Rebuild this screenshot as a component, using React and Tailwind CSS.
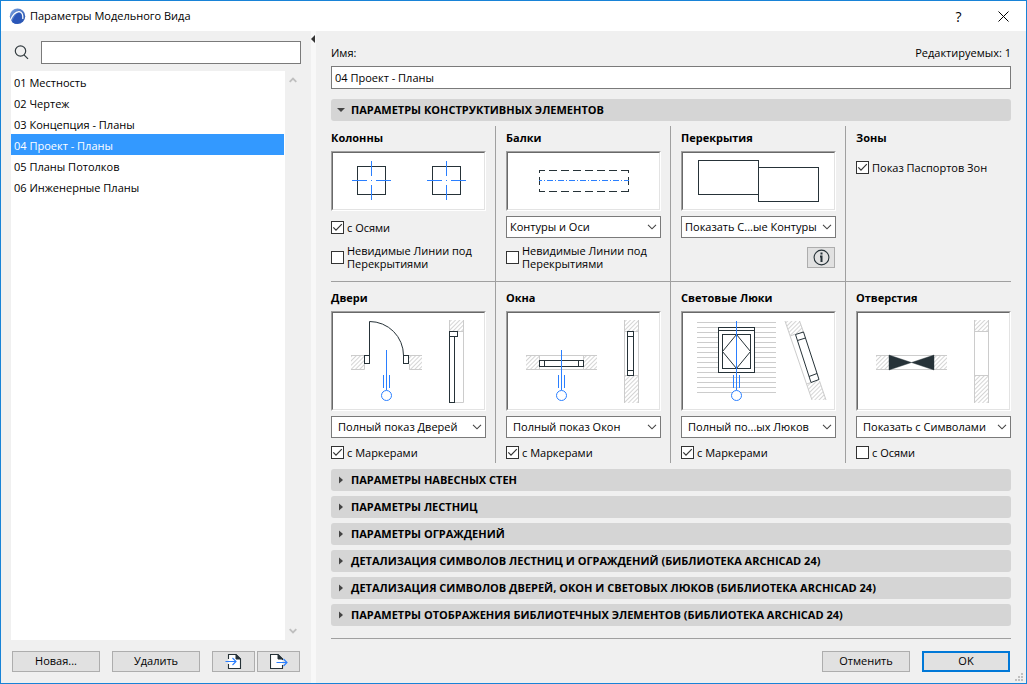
import React, { useState } from "react";

const models = [
  "01 Местность",
  "02 Чертеж",
  "03 Концепция - Планы",
  "04 Проект - Планы",
  "05 Планы Потолков",
  "06 Инженерные Планы",
];

const closedSections = [
  "ПАРАМЕТРЫ НАВЕСНЫХ СТЕН",
  "ПАРАМЕТРЫ ЛЕСТНИЦ",
  "ПАРАМЕТРЫ ОГРАЖДЕНИЙ",
  "ДЕТАЛИЗАЦИЯ СИМВОЛОВ ЛЕСТНИЦ И ОГРАЖДЕНИЙ (БИБЛИОТЕКА ARCHICAD 24)",
  "ДЕТАЛИЗАЦИЯ СИМВОЛОВ ДВЕРЕЙ, ОКОН И СВЕТОВЫХ ЛЮКОВ (БИБЛИОТЕКА ARCHICAD 24)",
  "ПАРАМЕТРЫ ОТОБРАЖЕНИЯ БИБЛИОТЕЧНЫХ ЭЛЕМЕНТОВ (БИБЛИОТЕКА ARCHICAD 24)",
];

const DARK = "#263238";
const BLUE = "#2a7fff";
const GREY = "#cccccc";

const Checkbox = ({ label, checked = false }) => {
  const [on, setOn] = useState(checked);
  return (
    <label className="flex items-center gap-[3px] leading-[13px]">
      <span className="grid h-[13px] w-[13px] shrink-0">
        <input
          type="checkbox"
          checked={on}
          onChange={(e) => setOn(e.target.checked)}
          className="col-start-1 row-start-1 h-[13px] w-[13px] appearance-none border border-[#333333] bg-white"
        />
        {on && (
          <svg
            viewBox="0 0 13 13"
            className="pointer-events-none col-start-1 row-start-1 h-[13px] w-[13px]"
          >
            <path d="M2.3 6.3L5 9.2L10.8 3.2" fill="none" stroke="#333" strokeWidth="1.2" />
          </svg>
        )}
      </span>
      <span>{label}</span>
    </label>
  );
};

const Dropdown = ({ label, value, className = "pl-[3px]" }) => (
  <div className="grid h-[22px] w-full">
    <select
      aria-label={label}
      className={`col-start-1 row-start-1 h-[22px] w-full appearance-none border border-[#7a7a7a] bg-white pr-4 leading-5 ${className}`}
    >
      <option>{value}</option>
    </select>
    <svg
      viewBox="0 0 10 6"
      className="pointer-events-none col-start-1 row-start-1 mr-1 h-[6px] w-[10px] self-center justify-self-end"
    >
      <path d="M1 0.8L5 4.8L9 0.8" fill="none" stroke="#444" strokeWidth="1.1" />
    </svg>
  </div>
);

// Sunken frame around the drawing
const Preview = ({ height, children }) => (
  <div className="border border-b-white border-l-[#a0a0a0] border-r-white border-t-[#a0a0a0]">
    <div className="border border-b-[#e3e3e3] border-l-[#696969] border-r-[#e3e3e3] border-t-[#696969] bg-white">
      <svg
        width="151"
        height={height}
        viewBox={`2 2 151 ${height}`}
        fill="none"
        className="mx-auto block"
      >
        {children}
      </svg>
    </div>
  </div>
);

const Cell = ({ title, last = false, children }) => (
  <div
    className={
      last
        ? "flex flex-col gap-[5px] px-[10px]"
        : "flex flex-col gap-[5px] border-r border-[#a0a0a0] pl-[10px] pr-[9px]"
    }
  >
    <h3 className="font-bold leading-4">{title}</h3>
    {children}
  </div>
);

const SectionHeader = ({ title, open = false, onClick }) => (
  <button
    type="button"
    aria-expanded={open}
    onClick={onClick}
    className="flex h-[22px] w-full items-center rounded-[3px] bg-[#d5d5d5] text-left font-bold"
  >
    <span className="flex w-5 justify-center">
      <svg width="8" height="8" viewBox="0 0 8 8" fill="#444">
        {open ? <path d="M0 2H8L4 6Z" /> : <path d="M2 0.5V7.5L6 4Z" />}
      </svg>
    </span>
    {title}
  </button>
);

const Marker = () => (
  <g stroke={BLUE}>
    <path d="M55.5 39V79M52.5 64V77M58.5 64V77" />
    <circle cx="55.5" cy="84.5" r="5" fill="#fff" />
  </g>
);

const ColumnMark = ({ x }) => (
  <g transform={`translate(${x} 0)`}>
    <rect x="26.5" y="15.5" width="28" height="28" stroke={DARK} />
    <path
      d="M21 29.5H36M40 29.5H41M45 29.5H60M40.5 10V25M40.5 34V49"
      stroke={BLUE}
    />
  </g>
);

// Wall in plan: two hatched ends with an opening between them
const WallPlan = () => (
  <g>
    <rect x="20" y="44" width="13" height="15" fill="url(#hatch)" />
    <rect x="78" y="44" width="13" height="15" fill="url(#hatch)" />
    <path d="M20 44.5H91M20 58.5H91M33.5 44V59M77.5 44V59" stroke={GREY} />
  </g>
);

// Wall in section
const WallSection = () => (
  <g>
    <rect x="118" y="9" width="15" height="11" fill="url(#hatch)" />
    <rect x="118" y="65" width="15" height="27" fill="url(#hatch)" />
    <path d="M118.5 9V92M132.5 9V92M118 20.5H133M118 64.5H133" stroke={GREY} />
  </g>
);

const DoorDrawing = () => (
  <Preview height={96}>
    <rect x="20" y="44" width="13" height="15" fill="url(#hatch)" />
    <rect x="78" y="44" width="13" height="15" fill="url(#hatch)" />
    <path d="M20 44.5H33M20 58.5H33.5V53M78 44.5H91M91 58.5H78.5V53" stroke={GREY} />
    <path d="M38.5 45V10.5A34 34 0 0 1 72.5 44.5" stroke={DARK} />
    <rect x="33.5" y="44.5" width="5" height="8" stroke={DARK} />
    <rect x="72.5" y="44.5" width="5" height="8" stroke={DARK} />
    <Marker />
    <rect x="118" y="9" width="15" height="11" fill="url(#hatch)" />
    <path d="M118.5 9V20M132.5 9V91.5H124M127 20.5H133" stroke={GREY} />
    <rect x="118.5" y="20.5" width="8" height="5" fill="#fff" stroke={DARK} />
    <rect x="118.5" y="25.5" width="5" height="66" fill="#fff" stroke={DARK} />
  </Preview>
);

const WindowDrawing = () => (
  <Preview height={96}>
    <WallPlan />
    <rect x="33.5" y="49.5" width="44" height="6" stroke={DARK} />
    <path d="M38.5 49V56M72.5 49V56" stroke={DARK} />
    <Marker />
    <WallSection />
    <rect x="121.5" y="20.5" width="6" height="44" stroke={DARK} />
    <path d="M121 25.5H128M121 59.5H128" stroke={DARK} />
  </Preview>
);

const SkylightDrawing = () => (
  <Preview height={96}>
    {Array.from({ length: 15 }, (_, i) => (
      <path key={i} d={`M16 ${11.5 + i * 5}H95`} stroke={GREY} />
    ))}
    <rect x="37.5" y="16.5" width="36" height="45" fill="#fff" stroke={DARK} />
    <path d="M37 19.5H74" stroke={DARK} />
    <rect x="41.5" y="23.5" width="28" height="34" stroke={DARK} />
    <path d="M55.5 23.5L69.5 40.5L55.5 57.5L41.5 40.5Z" stroke={DARK} />
    <Marker />
    <path d="M55.5 10V64" stroke={BLUE} />
    <path d="M104 10H119L122.5 21L109.5 25.5Z" fill="url(#hatch)" />
    <path d="M125.5 72.5L138 69.5L145 89H131Z" fill="url(#hatch)" />
    <path d="M104 10L131 89M118.5 10L122.5 21M138.5 70L145 89M109.5 25L114 23M125.5 73L130 71.5" stroke={GREY} />
    <path d="M114.5 23.5L122.5 21L138 68.5L130 71.5Z" fill="#fff" stroke={DARK} />
    <path d="M116.5 29.5L124.5 27M128 65.5L136 62.5" stroke={DARK} />
  </Preview>
);

const OpeningDrawing = () => (
  <Preview height={96}>
    <WallPlan />
    <path d="M33 44V59L55.5 51.5ZM78 44V59L55.5 51.5Z" fill={DARK} stroke={DARK} strokeWidth="0.4" />
    <WallSection />
  </Preview>
);

const buttonClass =
  "flex h-[21px] items-center justify-center border border-[#adadad] bg-[#e1e1e1]";

const App = () => {
  const [selected, setSelected] = useState(3);
  const [search, setSearch] = useState("");
  const [name, setName] = useState("04 Проект - Планы");
  const [open, setOpen] = useState(true);

  return (
    <div className="flex min-h-screen flex-col border border-[#1883d7] bg-[#f0f0f0] font-['Open_Sans','Noto_Sans',sans-serif] text-[11px] text-black">
      <svg className="absolute h-0 w-0" aria-hidden="true">
        <defs>
          <pattern
            id="hatch"
            width="3"
            height="3"
            patternUnits="userSpaceOnUse"
            patternTransform="rotate(45)"
          >
            <path d="M1.5 0V3" stroke="#d0d0d0" strokeWidth="0.9" />
          </pattern>
        </defs>
      </svg>

      {/* Title bar */}
      <header className="flex h-[30px] shrink-0 items-center bg-white pl-2">
        <svg width="17" height="17" viewBox="0 0 17 17" className="mr-1">
          <defs>
            <linearGradient id="logo" x1="0" y1="0" x2="1" y2="1">
              <stop offset="0" stopColor="#7ba4e2" />
              <stop offset="1" stopColor="#1d49a8" />
            </linearGradient>
          </defs>
          <circle cx="8.5" cy="8.2" r="7.7" fill="url(#logo)" />
          <path
            d="M1.2 12.5C3.2 7.5 6.5 3.8 10 3.6C13 3.5 14.2 7 13.8 11"
            fill="none"
            stroke="#fff"
            strokeWidth="1.2"
          />
          <path d="M3 14C4.5 9.5 7.2 5.2 9.8 4.8C12.4 4.8 13.2 8.5 12.6 13.6C9.5 16.4 5.5 16.4 3 14Z" fill="#2a56b8" />
        </svg>
        <h1 className="flex-1">Параметры Модельного Вида</h1>
        <button type="button" aria-label="Справка" className="flex h-full w-[45px] items-center justify-center text-[14px]">
          ?
        </button>
        <button type="button" aria-label="Закрыть" className="flex h-full w-[45px] items-center justify-center">
          <svg width="11" height="11" viewBox="0 0 11 11" stroke="#000">
            <path d="M0.5 0.5L10.5 10.5M10.5 0.5L0.5 10.5" />
          </svg>
        </button>
      </header>

      <div className="flex flex-1">
        {/* List of model view options */}
        <aside className="flex w-[310px] shrink-0 flex-col pb-[11px] pl-[10px] pr-[10px] pt-[10px]">
          <label className="flex items-center">
            <span className="w-[30px] pl-[3px]">
              <svg width="15" height="15" viewBox="0 0 15 15" fill="none" stroke="#333c40" strokeWidth="1.2">
                <circle cx="6.5" cy="6" r="5.2" />
                <path d="M10 9.8L14 13.8" />
              </svg>
            </span>
            <input
              type="text"
              aria-label="Поиск"
              value={search}
              onChange={(e) => setSearch(e.target.value)}
              className="h-[23px] min-w-0 flex-1 border border-[#7a7a7a] bg-white px-1"
            />
          </label>
          <div className="mt-[7px] flex flex-1">
            <ul className="flex-1 bg-white">
              {models.map((model, i) => (
                <li key={model} className="pr-px">
                  <button
                    type="button"
                    onClick={() => setSelected(i)}
                    className={
                      i === selected
                        ? "flex h-[21px] w-full items-end bg-[#3399ff] pb-px pl-[3px] text-white"
                        : "flex h-[21px] w-full items-end pb-px pl-[3px]"
                    }
                  >
                    {model}
                  </button>
                </li>
              ))}
            </ul>
            <div className="flex w-4 flex-col items-center justify-between py-[6px]">
              <svg width="8" height="6" viewBox="0 0 8 6" fill="none" stroke="#bfbfbf" strokeWidth="1.8">
                <path d="M0.7 4.8L4 1.5L7.3 4.8" />
              </svg>
              <svg width="8" height="6" viewBox="0 0 8 6" fill="none" stroke="#bfbfbf" strokeWidth="1.8">
                <path d="M0.7 1.2L4 4.5L7.3 1.2" />
              </svg>
            </div>
          </div>
          <div className="mt-[11px] flex pl-px">
            <button type="button" className={`${buttonClass} w-[88px]`}>
              Новая...
            </button>
            <button type="button" className={`${buttonClass} ml-3 w-[88px]`}>
              Удалить
            </button>
            <button type="button" aria-label="Импорт" className={`${buttonClass} ml-3 w-[43px]`}>
              <svg width="17" height="16" viewBox="0 0 17 16" fill="none">
                <path d="M3.5 5V0.5H11L15.5 5V14.5H3.5V10" fill="#fff" stroke={DARK} strokeWidth="1.1" />
                <path d="M11 0.5V5H15.5Z" fill={DARK} stroke={DARK} />
                <path d="M0.5 7.5H10.5M7.5 4L11 7.5L7.5 11" stroke={BLUE} strokeWidth="1.1" />
              </svg>
            </button>
            <button type="button" aria-label="Экспорт" className={`${buttonClass} ml-[2px] w-[43px]`}>
              <svg width="18" height="16" viewBox="0 0 18 16" fill="none">
                <path d="M12.5 11V14.5H0.5V0.5H8L12.5 5V6" fill="#fff" stroke={DARK} strokeWidth="1.1" />
                <path d="M8 0.5V5H12.5Z" fill={DARK} stroke={DARK} />
                <path d="M6.5 8.5H16.5M13.5 5L17 8.5L13.5 12" stroke={BLUE} strokeWidth="1.1" />
              </svg>
            </button>
          </div>
        </aside>

        <div className="w-[5px] shrink-0 bg-[#f8f8f8] pt-1">
          <svg width="4" height="8" viewBox="0 0 4 8" fill="#333">
            <path d="M4 0V8L0 4Z" />
          </svg>
        </div>

        {/* Settings */}
        <main className="flex min-w-0 flex-1 flex-col px-[15px] pb-[11px] pt-[14px]">
          <div className="flex justify-between leading-4">
            <label htmlFor="name">Имя:</label>
            <span>Редактируемых: 1</span>
          </div>
          <input
            id="name"
            type="text"
            value={name}
            onChange={(e) => setName(e.target.value)}
            className="mb-[10px] mt-[5px] h-[23px] w-full border border-[#7a7a7a] bg-white px-[3px]"
          />
          <SectionHeader
            title="ПАРАМЕТРЫ КОНСТРУКТИВНЫХ ЭЛЕМЕНТОВ"
            open={open}
            onClick={() => setOpen(!open)}
          />

          {open && (
            <div className="pt-[5px]">
              <div className="-mx-[10px] grid grid-cols-4 *:pb-[10px] *:pt-1">
                <Cell title="Колонны">
                  <Preview height={56}>
                    <ColumnMark x={0} />
                    <ColumnMark x={75} />
                  </Preview>
                  <div className="flex h-[22px] items-center">
                    <Checkbox label="с Осями" checked />
                  </div>
                  <div className="flex h-7 items-center">
                    <Checkbox label="Невидимые Линии под Перекрытиями" />
                  </div>
                </Cell>
                <Cell title="Балки">
                  <Preview height={56}>
                    <path d="M33 19.5H123M33 40.5H123" stroke={DARK} strokeDasharray="8 4" strokeDashoffset="2" />
                    <path d="M33.5 19V22M33.5 26V34M33.5 38V41M122.5 19V22M122.5 26V34M122.5 38V41" stroke={DARK} />
                    <path d="M33 29.5H123" stroke={BLUE} strokeDasharray="6 2 1 2" strokeDashoffset="3" />
                  </Preview>
                  <Dropdown label="Балки" value="Контуры и Оси" />
                  <div className="flex h-7 items-center">
                    <Checkbox label="Невидимые Линии под Перекрытиями" />
                  </div>
                </Cell>
                <Cell title="Перекрытия">
                  <Preview height={56}>
                    <rect x="17.5" y="9.5" width="60" height="34" stroke={DARK} />
                    <rect x="77.5" y="16.5" width="60" height="34" stroke={DARK} />
                  </Preview>
                  <Dropdown label="Перекрытия" value="Показать С...ые Контуры" />
                  <div className="flex h-7 items-center justify-end pr-px">
                    <button type="button" aria-label="Информация" className={`${buttonClass} w-7`}>
                      <svg width="17" height="17" viewBox="0 0 17 17" fill="none">
                        <circle cx="8.5" cy="8.5" r="7.4" stroke={DARK} strokeWidth="1.1" />
                        <path d="M8.5 3.6V5.6M7 7.5H8.5V13" stroke={DARK} strokeWidth="2" />
                      </svg>
                    </button>
                  </div>
                </Cell>
                <Cell title="Зоны" last>
                  <div className="flex h-8 items-center">
                    <Checkbox label="Показ Паспортов Зон" checked />
                  </div>
                </Cell>
              </div>
              <hr className="border-[#a0a0a0]" />
              <div className="-mx-[10px] grid grid-cols-4 *:pb-[2px] *:pt-2">
                <Cell title="Двери">
                  <DoorDrawing />
                  <Dropdown label="Двери" value="Полный показ Дверей" className="pl-[6px]" />
                  <div className="flex h-[18px] items-center">
                    <Checkbox label="с Маркерами" checked />
                  </div>
                </Cell>
                <Cell title="Окна">
                  <WindowDrawing />
                  <Dropdown label="Окна" value="Полный показ Окон" className="pl-[6px]" />
                  <div className="flex h-[18px] items-center">
                    <Checkbox label="с Маркерами" checked />
                  </div>
                </Cell>
                <Cell title="Световые Люки">
                  <SkylightDrawing />
                  <Dropdown label="Световые Люки" value="Полный по...ых Люков" className="pl-[6px]" />
                  <div className="flex h-[18px] items-center">
                    <Checkbox label="с Маркерами" checked />
                  </div>
                </Cell>
                <Cell title="Отверстия" last>
                  <OpeningDrawing />
                  <Dropdown label="Отверстия" value="Показать с Символами" className="pl-[6px]" />
                  <div className="flex h-[18px] items-center">
                    <Checkbox label="с Осями" />
                  </div>
                </Cell>
              </div>
            </div>
          )}

          <div className="mt-[6px] flex flex-col gap-[5px]">
            {closedSections.map((title) => (
              <SectionHeader key={title} title={title} />
            ))}
          </div>

          <div className="mt-auto flex justify-end gap-3 border-t border-[#a0a0a0] pr-px pt-3">
            <button type="button" className={`${buttonClass} w-[88px]`}>
              Отменить
            </button>
            <button
              type="button"
              className="flex h-[21px] w-[88px] items-center justify-center border-2 border-[#0078d7] bg-[#e1e1e1]"
            >
              OK
            </button>
          </div>
        </main>
      </div>

      {/* Resize grip */}
      <svg className="absolute bottom-[3px] right-1 h-2 w-2" viewBox="0 0 8 8" fill="#bfbfbf">
        <path d="M6 0H8V2H6ZM3 3H5V5H3ZM6 3H8V5H6ZM0 6H2V8H0ZM3 6H5V8H3ZM6 6H8V8H6Z" />
      </svg>
    </div>
  );
};

export default App;
